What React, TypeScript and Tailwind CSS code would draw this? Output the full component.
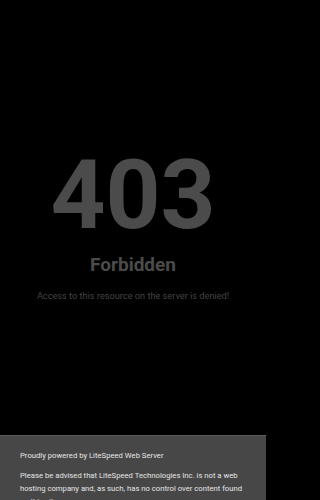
export default function App() {
  return (
    <div className="min-h-screen w-full bg-black">
      <div className="h-[500px] w-[266px] overflow-hidden bg-black flex flex-col font-['Roboto',sans-serif]">
        <main className="flex-1 flex flex-col items-center pt-[147px]">
          <h1 className="text-[96px] leading-none font-bold text-[#4b4b4b]">403</h1>
          <h2 className="mt-[12px] text-[19px] leading-none font-bold text-[#4b4b4b]">Forbidden</h2>
          <p className="mt-[17px] text-[9.2px] leading-none text-[#444444]">
            Access to this resource on the server is denied!
          </p>
        </main>
        <footer className="h-[65px] shrink-0 bg-[#474747] border-t border-[#5c5c5c] px-[20px] pt-[13px] text-[7.7px] leading-[13px] text-[#e6e6e6]">
          <p>Proudly powered by LiteSpeed Web Server</p>
          <p className="mt-[7px]">
            Please be advised that LiteSpeed Technologies Inc. is not a web hosting company and, as such, has no control
            over content found on this site.
          </p>
        </footer>
      </div>
    </div>
  );
}
